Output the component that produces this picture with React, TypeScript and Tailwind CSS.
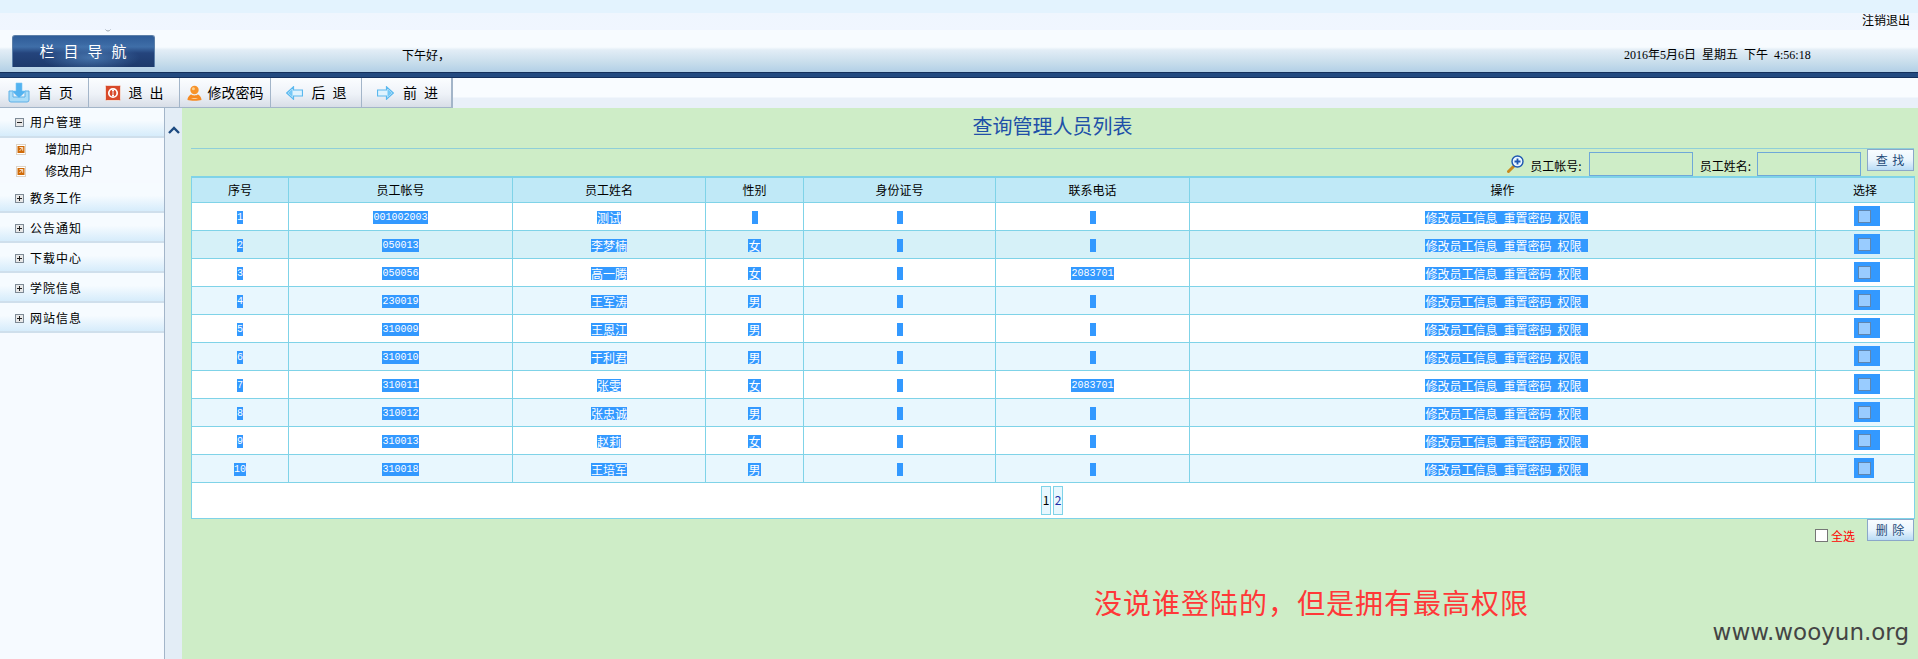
import React from "react";

const rows: [string, string, string, string, string][] = [
  ["1", "001002003", "测试", "", ""],
  ["2", "050013", "李梦楠", "女", ""],
  ["3", "050056", "高一腾", "女", "2083701"],
  ["4", "230019", "王军涛", "男", ""],
  ["5", "310009", "王恩江", "男", ""],
  ["6", "310010", "于利君", "男", ""],
  ["7", "310011", "张雯", "女", "2083701"],
  ["8", "310012", "张忠诚", "男", ""],
  ["9", "310013", "赵莉", "女", ""],
  ["10", "310018", "王培军", "男", ""],
];

function Mark({ text }: { text: string }) {
  if (!text) return <span className="inline-block h-[13px] w-[6px] bg-[#3399ff] align-middle" />;
  const digits = /^[0-9]+$/.test(text);
  return (
    <span
      className={
        "inline-block h-[13px] bg-[#3399ff] align-middle leading-[13px] text-white " +
        (digits ? "font-['Liberation_Mono',monospace] text-[10px]" : "text-[12px]")
      }
    >
      {text}
    </span>
  );
}

function HomeIcon() {
  return (
    <svg width="22" height="22" viewBox="0 0 22 22">
      <path d="M1 9v9a2 2 0 0 0 2 2h16a2 2 0 0 0 2-2V9l-4 0v6H5V9z" fill="#a9dcf8" stroke="#5fb0e6" />
      <path d="M8 1h6v8h4l-7 7-7-7h4z" fill="#52b2f0" stroke="#7ac6f5" strokeWidth="0.6" />
    </svg>
  );
}
function ExitIcon() {
  return (
    <svg width="16" height="16" viewBox="0 0 16 16">
      <rect x="0.5" y="0.5" width="15" height="15" rx="1" fill="#d8492a" stroke="#f3d9d0" />
      <circle cx="8" cy="8" r="4.2" fill="none" stroke="#fff" strokeWidth="1.7" />
      <rect x="7" y="5" width="2" height="6" fill="#fff" />
      <rect x="7.5" y="6" width="1" height="4" fill="#c83d20" />
    </svg>
  );
}
function UserIcon() {
  return (
    <svg width="15" height="16" viewBox="0 0 15 16">
      <circle cx="7.5" cy="5" r="4.2" fill="#f7932b" />
      <circle cx="6.4" cy="3.8" r="1.5" fill="#fcd08e" />
      <path d="M0.5 15c0-3.5 3-5.5 4-5.5 1 1.2 5 1.2 6 0 1 0 4 2 4 5.5-3 1-11 1-14 0z" fill="#f68a22" />
      <path d="M4 14c1-1 6-1 7 0z" fill="#fde1b8" />
    </svg>
  );
}
function ArrowIcon({ dir }: { dir: "left" | "right" }) {
  return (
    <svg width="17" height="14" viewBox="0 0 17 14" className={dir === "right" ? "" : "-scale-x-100"}>
      <path d="M0.5 4h9V0.8L16.3 7l-6.8 6.2V10h-9z" fill="#dff3fe" stroke="#5ab8ee" strokeWidth="1.2" />
      <path d="M10.5 3v8L15 7z" fill="#74c8f6" />
    </svg>
  );
}
function LeafIcon() {
  return (
    <svg width="10" height="11" viewBox="0 0 10 11" className="shrink-0">
      <rect x="0.5" y="0.5" width="9" height="10" fill="#fff" stroke="#ddd3c6" />
      <rect x="1.5" y="2" width="7" height="7" fill="#d06a08" />
      <path d="M3.5 3.5h3.2v3.2M6.5 3.7L3.5 7" fill="none" stroke="#fff" strokeWidth="0.8" />
    </svg>
  );
}
function PlusMinus({ open }: { open?: boolean }) {
  return (
    <svg width="9" height="9" viewBox="0 0 9 9" className="shrink-0">
      <rect x="0.5" y="0.5" width="8" height="8" fill="#e8e8e8" stroke="#7d8a96" />
      <path d="M2 4.5h5" stroke="#222" />
      {!open && <path d="M4.5 2v5" stroke="#222" />}
    </svg>
  );
}
function SearchIcon() {
  return (
    <svg width="17" height="18" viewBox="0 0 17 18">
      <path d="M1.5 16.5l5-5" stroke="#c98a1e" strokeWidth="3" strokeLinecap="round" />
      <circle cx="10.5" cy="6.5" r="5.5" fill="#eaf6ff" stroke="#1d56b0" strokeWidth="1.4" />
      <path d="M10.5 3.5v6M7.5 6.5h6" stroke="#1d56b0" strokeWidth="1.8" />
    </svg>
  );
}

function ToolButton({ icon, label, last, gap, width }: { icon: React.ReactNode; label: React.ReactNode; last?: boolean; gap: string; width: string }) {
  return (
    <div
      className={
        "flex h-full items-center justify-center border-b border-[#a3b5c9] bg-[linear-gradient(#fbfdff,#eef2f8_55%,#d8dee7)] text-[14px] text-black " +
        width +
        " " +
        gap +
        (last ? " border-r-[2px]" : " border-r")
      }
    >
      {icon}
      {label}
    </div>
  );
}

function SideHead({ label, open }: { label: string; open?: boolean }) {
  return (
    <div
      className={
        "flex h-[30px] items-center gap-[6px] border-b-2 border-[#cfdfec] bg-[linear-gradient(#f6fbff_45%,#d6ecfb)] pl-[15px] text-[12px] tracking-[1px] text-black " +
        (open ? "" : "pt-[2px]")
      }
    >
      <PlusMinus open={open} />
      {label}
    </div>
  );
}

function LightButton({ label }: { label: string }) {
  return (
    <div className="flex h-[22px] w-[47px] items-center justify-center border border-[#8ba7c9] bg-[linear-gradient(#f8fcff,#eaf5fd_50%,#b9dcf6)] text-[12px] tracking-[1px] whitespace-pre text-[#1d4a78]">
      {label}
    </div>
  );
}

export default function App() {
  const cell = "border border-[#7fd3e8] p-0 text-center text-[12px]";
  return (
    <div className="relative flex h-[659px] w-[1918px] flex-col overflow-hidden bg-[#ceedc7] font-['Noto_Sans_CJK_SC',sans-serif] text-black">
      {/* header */}
      <header className="relative h-[72px] shrink-0 bg-[linear-gradient(#e3f3fe_0,#e3f3fe_13px,#eff6fe_13px,#f0f6ff_30px,#f7fbff_30px,#f7fbff_47px,#e2edf6_50px,#c9deec_62px,#b2cfe6_72px)]">
        <svg width="6" height="3" viewBox="0 0 6 3" className="absolute top-[29px] left-[105px]">
          <path d="M0.5 0.5c1 2 4 2 5 0" fill="none" stroke="#9aa6b0" />
        </svg>
        <div className="flex h-[30px] items-start justify-end pt-[12px] pr-[8px] text-[12px] leading-[16px]">注销退出</div>
        <div className="flex items-start">
          <div className="mt-[5px] ml-[12px] flex h-[32px] w-[143px] items-center justify-center rounded-t-[3px] border-x border-t border-[#5c7fa8] bg-[radial-gradient(ellipse_at_55%_70%,#5c93cc99,transparent_45%),linear-gradient(#2f5c98,#3f6ea8_35%,#24447c_55%,#1e3a6c)] pl-[8px] text-[15px] tracking-[9px] text-white">
            栏目导航
          </div>
          <div className="mt-[17px] ml-[247px] text-[12px] leading-[16px]">下午好，</div>
          <div className="mt-[17px] ml-[1174px] font-['Liberation_Serif','Noto_Sans_CJK_SC',serif] text-[12px] leading-[16px] whitespace-pre">
            2016年5月6日  星期五  下午  4:56:18
          </div>
        </div>
      </header>
      <div className="h-[6px] shrink-0 border-y border-[#14305c] bg-[#234a80]" />
      {/* toolbar */}
      <div className="flex h-[30px] shrink-0 bg-[linear-gradient(#f9fcff_0,#f9fcff_19px,#e9f0f9_20px,#e9f0f9_30px)]">
        <ToolButton width="w-[89px]" icon={<HomeIcon />} gap="gap-[8px]" label={<span className="tracking-[7px]">首页</span>} />
        <ToolButton width="w-[91px] pl-[7px]" icon={<ExitIcon />} gap="gap-[8px]" label={<span className="tracking-[7px]">退出</span>} />
        <ToolButton width="w-[91px]" icon={<UserIcon />} gap="gap-[6px]" label={<span>修改密码</span>} />
        <ToolButton width="w-[91px] pl-[7px]" icon={<ArrowIcon dir="left" />} gap="gap-[9px]" label={<span className="tracking-[7px]">后退</span>} />
        <ToolButton width="w-[91px] pl-[9px]" icon={<ArrowIcon dir="right" />} gap="gap-[9px]" last label={<span className="tracking-[7px]">前进</span>} />
      </div>
      {/* body */}
      <div className="flex min-h-0 flex-1">
        <aside className="w-[165px] shrink-0 border-r border-[#a3b5c9] bg-[#f6faff]">
          <SideHead label="用户管理" open />
          <div className="flex h-[45px] flex-col">
            {["增加用户", "修改用户"].map((t) => (
              <div key={t} className="flex h-[22px] items-center pl-[16px] text-[12px]">
                <LeafIcon />
                <span className="ml-[19px]">{t}</span>
              </div>
            ))}
          </div>
          {["教务工作", "公告通知", "下载中心", "学院信息", "网站信息"].map((t) => (
            <SideHead key={t} label={t} />
          ))}
        </aside>
        <div className="w-[17px] shrink-0 bg-[#e3edf6] pt-[18px] pl-[3px]">
          <svg width="12" height="8" viewBox="0 0 12 8">
            <path d="M1 7l5-5 5 5" fill="none" stroke="#1d4a80" strokeWidth="2.4" />
          </svg>
        </div>
        <main className="relative min-w-0 flex-1 pr-[4px] pl-[9px]">
          <h1 className="flex h-[41px] items-center justify-center border-b border-[#8fcfd8] pb-[4px] text-[20px] font-normal text-[#2050a8]">
            查询管理人员列表
          </h1>
          <div className="flex h-[27px] justify-end text-[12px]">
            <div className="mt-[6px] mr-[6px]">
              <SearchIcon />
            </div>
            <span className="mt-[9px] leading-[16px]">员工帐号:</span>
            <div className="mt-[3px] ml-[7px] h-[24px] w-[104px] border border-[#6fa8d8]" />
            <span className="mt-[9px] ml-[7px] leading-[16px]">员工姓名:</span>
            <div className="mt-[3px] ml-[6px] h-[24px] w-[104px] border border-[#6fa8d8]" />
            <div className="ml-[6px]">
              <LightButton label="查 找" />
            </div>
          </div>
          <table className="w-[1723px] table-fixed border-collapse">
            <colgroup>
              <col className="w-[97px]" />
              <col className="w-[224px]" />
              <col className="w-[193px]" />
              <col className="w-[98px]" />
              <col className="w-[192px]" />
              <col className="w-[194px]" />
              <col className="w-[626px]" />
              <col className="w-[99px]" />
            </colgroup>
            <thead>
              <tr className="bg-[#c0e9f7]">
                {["序号", "员工帐号", "员工姓名", "性别", "身份证号", "联系电话", "操作", "选择"].map((h) => (
                  <th key={h} className={cell + " h-[25px] border-t-2 font-normal"}>
                    {h}
                  </th>
                ))}
              </tr>
            </thead>
            <tbody>
              {rows.map((r, i) => (
                <tr key={r[0]} className={i % 2 === 0 ? "bg-white" : i === 1 ? "bg-[#d6f1f8]" : "bg-[#e8f7fe]"}>
                  <td className={cell + " h-[28px]"}><Mark text={r[0]} /></td>
                  <td className={cell}><Mark text={r[1]} /></td>
                  <td className={cell}><Mark text={r[2]} /></td>
                  <td className={cell}><Mark text={r[3]} /></td>
                  <td className={cell}><Mark text="" /></td>
                  <td className={cell}><Mark text={r[4]} /></td>
                  <td className={cell}>
                    <span className="ml-[8px] inline-flex h-[13px] items-center gap-[6px] bg-[#3399ff] pr-[6px] align-middle leading-[13px] text-white">
                      <span>修改员工信息</span>
                      <span>重置密码</span>
                      <span>权限</span>
                    </span>
                  </td>
                  <td className={cell + " text-left"}>
                    <span className={"ml-[38px] flex h-[20px] items-center bg-[#3399ff] pl-[4px] " + (i === 9 ? "w-[20px]" : "w-[26px]")}>
                      <span className="block h-[13px] w-[13px] border border-[#5f86b0] bg-[#99ccff]" />
                    </span>
                  </td>
                </tr>
              ))}
              <tr className="bg-white">
                <td colSpan={8} className={cell + " h-[36px]"}>
                  <div className="flex justify-center gap-[2px] pr-[2px] text-[12px]">
                    <span className="flex h-[29px] w-[10px] items-center justify-center border border-[#7fd3e8] bg-[#e8f7fe]">1</span>
                    <span className="flex h-[29px] w-[10px] items-center justify-center border border-[#7fd3e8] bg-[#e8f7fe] text-[#1b2fa8]">2</span>
                  </div>
                </td>
              </tr>
            </tbody>
          </table>
          <div className="flex items-start justify-end">
            <span className="mt-[10px] h-[13px] w-[13px] border border-[#767676] bg-white" />
            <span className="mt-[9px] mr-[12px] ml-[3px] text-[12px] leading-[16px] text-[#ff0000]">全选</span>
            <LightButton label="删 除" />
          </div>
          <div className="absolute top-[476px] left-[912px] text-[28px] leading-[36px] tracking-[1px] whitespace-nowrap text-[#ff3838]">
            没说谁登陆的，但是拥有最高权限
          </div>
          <div className="absolute top-[508px] right-[9px] font-['DejaVu_Sans',sans-serif] text-[23px] leading-[32px] whitespace-nowrap text-[#444444]">
            www.wooyun.org
          </div>
        </main>
      </div>
    </div>
  );
}
